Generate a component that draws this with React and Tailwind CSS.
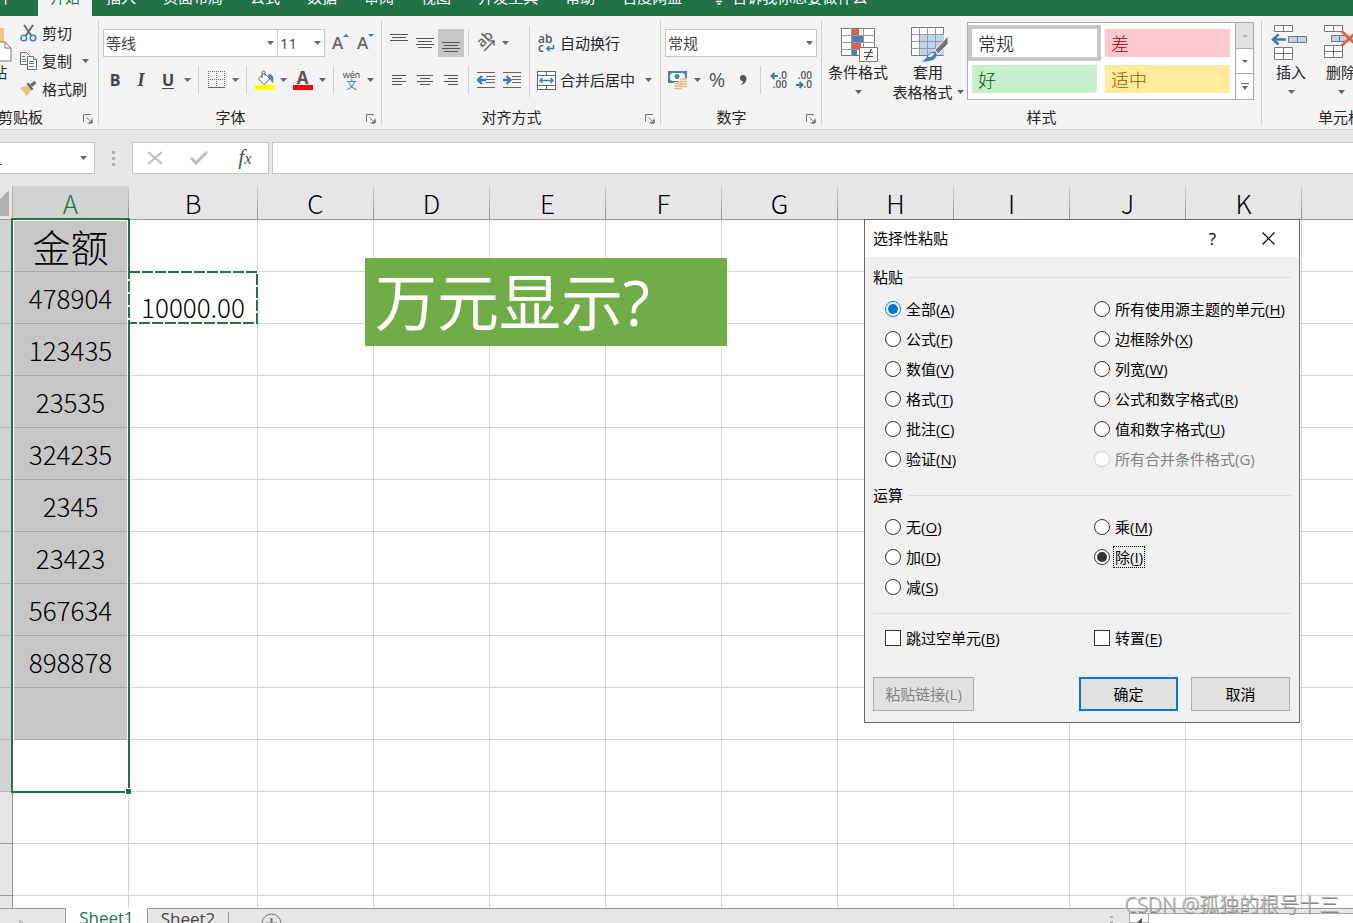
const UI = "font-['Open_Sans','Noto_Sans_CJK_SC',sans-serif]";
const CELL = "font-['Noto_Sans_CJK_SC',sans-serif] font-light";

const TABS = ['文件', '开始', '插入', '页面布局', '公式', '数据', '审阅', '视图', '开发工具', '帮助', '百度网盘'];
const COLUMNS = ['A', 'B', 'C', 'D', 'E', 'F', 'G', 'H', 'I', 'J', 'K', 'L'];
const AMOUNTS = ['金额', '478904', '123435', '23535', '324235', '2345', '23423', '567634', '898878', '', '', '', '', ''];

const PASTE_OPTIONS = [
  { text: '全部', hotkey: 'A', checked: true },
  { text: '所有使用源主题的单元', hotkey: 'H' },
  { text: '公式', hotkey: 'F' },
  { text: '边框除外', hotkey: 'X' },
  { text: '数值', hotkey: 'V' },
  { text: '列宽', hotkey: 'W' },
  { text: '格式', hotkey: 'T' },
  { text: '公式和数字格式', hotkey: 'R' },
  { text: '批注', hotkey: 'C' },
  { text: '值和数字格式', hotkey: 'U' },
  { text: '验证', hotkey: 'N' },
  { text: '所有合并条件格式', hotkey: 'G', disabled: true },
];

const OPERATIONS = [
  { text: '无', hotkey: 'O' },
  { text: '乘', hotkey: 'M' },
  { text: '加', hotkey: 'D' },
  { text: '除', hotkey: 'I', checked: true, focused: true },
  { text: '减', hotkey: 'S' },
];

/* ---------- icons ---------- */

function Caret({ className = '' }) {
  return (
    <svg width="7" height="4" viewBox="0 0 7 4" className={`shrink-0 ${className}`} fill="#666">
      <path d="M0 0h7L3.5 4z" />
    </svg>
  );
}

function CaretButton({ label, className = '' }) {
  return (
    <button aria-label={label} className={`flex h-7 w-3 shrink-0 items-center justify-center ${className}`}>
      <Caret />
    </button>
  );
}

function PasteIcon() {
  return (
    <svg width="40" height="38" viewBox="0 0 40 38">
      <path d="M6 4h26v30H6z" fill="#eec77f" />
      <path d="M18 18h15l6 6v13H18z" fill="#fff" stroke="#777" />
      <path d="M33 18v6h6" fill="none" stroke="#777" />
    </svg>
  );
}

function ScissorsIcon() {
  return (
    <svg width="17" height="18" viewBox="0 0 17 18" fill="none">
      <path d="M4 1l7.5 11M13 1L5.500 12" stroke="#666" strokeWidth="2" />
      <circle cx="3.800" cy="14" r="2.800" stroke="#4a80ba" strokeWidth="1.500" />
      <circle cx="13" cy="14" r="2.800" stroke="#4a80ba" strokeWidth="1.500" />
    </svg>
  );
}

function CopyIcon() {
  return (
    <svg width="17" height="18" viewBox="0 0 17 18" fill="#fff" stroke="#6b6b6b">
      <path d="M.5.5h6l3 3v9h-9z" />
      <path d="M2 4.500h3M2 7.500h4M2 9.500h4" stroke="#4a80ba" />
      <path d="M7.500 4.500h6l3 3v10h-9z" />
      <path d="M13.500 4.500v3h3" />
      <path d="M9 9.500h5M9 11.500h5M9 14.500h5" stroke="#4a80ba" />
    </svg>
  );
}

function BrushIcon() {
  return (
    <svg width="17" height="16" viewBox="0 0 17 16">
      <path d="M0 7l7-2.500 4 5L7 15z" fill="#eec07b" />
      <path d="M6.500 3l2-1.500 5 6.500-2 1.500z" fill="#666" />
      <path d="M11 4.500L15.500 1" stroke="#666" strokeWidth="3" />
    </svg>
  );
}

function LauncherIcon() {
  return (
    <svg width="10" height="10" viewBox="0 0 10 10" fill="none" stroke="#777">
      <path d="M.5 8V.5H8" />
      <path d="M3.500 3.500L8 8M9 4.500V9H4.500" />
      <path d="M9 6v3H6z" fill="#777" />
    </svg>
  );
}

function BorderIcon() {
  return (
    <svg width="17" height="18" viewBox="0 0 17 18" fill="none" stroke="#666" shapeRendering="crispEdges">
      <path d="M0 .5h17M0 8.500h17M.5 0v16M8.500 0v16M16.500 0v16" strokeDasharray="1 1" />
      <path d="M0 16.500h17" />
    </svg>
  );
}

function FillIcon() {
  return (
    <svg width="20" height="20" viewBox="0 0 20 20">
      <path d="M9 3l6 6-6 5.500L3.500 9z" fill="#fff" stroke="#666" />
      <path d="M7 8V2.500C7 .5 10 .5 10 2.500V6" fill="none" stroke="#666" />
      <path d="M13 4c5 0 6 3 5 9-2-1-2-4-4-5z" fill="#4a80ba" />
      <path d="M0 15h20v5H0z" fill="#ff0" />
    </svg>
  );
}

function AlignIcon({ lines, top = 0 }) {
  return (
    <svg width="18" height="18" viewBox="0 0 18 18" stroke="#555" shapeRendering="crispEdges">
      {lines.map(([x1, x2], i) => (
        <path key={i} d={`M${x1} ${top + i * 3 + 0.5}H${x2}`} />
      ))}
    </svg>
  );
}

function IndentIcon({ flip }) {
  return (
    <svg width="18" height="17" viewBox="0 0 18 17" fill="none" stroke="#666">
      <path d="M0 .5h18M9 4.500h9M9 7.500h9M9 10.500h9M0 15.500h18" shapeRendering="crispEdges" />
      <path d={flip ? 'M0 8h7M3.500 4L7.500 8l-4 4' : 'M9 8H1M5 4L1 8l4 4'} stroke="#4078b8" strokeWidth="2.400" />
    </svg>
  );
}

function OrientationIcon() {
  return (
    <svg width="20" height="20" viewBox="0 0 20 20">
      <text x="6" y="15" fontSize="14" fontWeight="600" fill="#666" fontFamily="Open Sans, sans-serif" transform="rotate(-45 6 15)">ab</text>
      <path d="M8 18L18 8M13.500 8H18v4.500" fill="none" stroke="#666" strokeWidth="1.500" />
    </svg>
  );
}

function WrapIcon() {
  return (
    <svg width="17" height="19" viewBox="0 0 17 19">
      <text x="0" y="9" fontSize="12" fontWeight="600" fill="#555" fontFamily="Open Sans, sans-serif">ab</text>
      <text x="0" y="18" fontSize="12" fontWeight="600" fill="#555" fontFamily="Open Sans, sans-serif">c</text>
      <path d="M15.500 11v3.500H9M11.500 12L9 14.500l2.500 2.500" fill="none" stroke="#4078b8" strokeWidth="1.600" />
    </svg>
  );
}

function MergeIcon() {
  return (
    <svg width="19" height="19" viewBox="0 0 19 19" fill="none" stroke="#666">
      <path d="M.5.5h18v18H.5zM0 4.500h19M0 14.500h19M9.500 0v4M9.500 15v4" fill="#fff" shapeRendering="crispEdges" />
      <path d="M3 9.500h13M5.500 7L3 9.500 5.500 12M13.500 7L16 9.500 13.500 12" stroke="#4078b8" strokeWidth="1.500" />
    </svg>
  );
}

function MoneyIcon() {
  return (
    <svg width="20" height="19" viewBox="0 0 20 19">
      <path d="M0 0h19v12H0z" fill="#4a80ba" />
      <path d="M2 4l2-2h11l2 2v4l-2 2H4L2 8z" fill="#fff" />
      <circle cx="9" cy="5.500" r="2.500" fill="#4a80ba" />
      <path d="M11 7h8v9h-8zM6 11h8v8H6z" fill="#f3f3f3" />
      <path d="M12 8h7M12 10.500h7M12 13h7M12 15.500h7M6 12.500h8M6 15h8M6 17.500h8" stroke="#e9b872" strokeWidth="1.700" />
    </svg>
  );
}

function DecimalIcon({ decrease }) {
  return (
    <svg width="18" height="18" viewBox="0 0 18 18" fontFamily="Open Sans, sans-serif" fontSize="10" fontWeight="600" fill="#555">
      <text x="17" y="8" textAnchor="end">{decrease ? '.00' : '.0'}</text>
      <text x="17" y="17" textAnchor="end">{decrease ? '.0' : '.00'}</text>
      <path
        d={decrease ? 'M1 14h6M4.500 11L7.500 14l-3 3' : 'M8 5H2M4.500 2l-3 3 3 3'}
        fill="none"
        stroke="#4078b8"
        strokeWidth="2"
      />
    </svg>
  );
}

function ConditionalIcon() {
  return (
    <svg width="38" height="38" viewBox="0 0 38 38" className="ml-[3px]">
      <path d="M.5 4.500h33v27H.5z" fill="#fff" stroke="#777" />
      <path d="M0 11.500h34M0 18.500h34M0 25.500h34M10.500 4v28M22.500 4v28" stroke="#999" />
      <path d="M11 5h7v6h-7zM11 19h9v6h-9z" fill="#dc6446" />
      <path d="M11 12h11v6H11zM11 26h5v5h-5z" fill="#4a80ba" />
      <path d="M18.500 23.500h18v14h-18z" fill="#fff" stroke="#777" />
      <path d="M23 28.500h9M23 32.500h9M30.500 25L25 36" stroke="#444" strokeWidth="1.200" />
    </svg>
  );
}

function TableStyleIcon() {
  return (
    <svg width="38" height="38" viewBox="0 0 38 38" className="ml-[3px]">
      <path d="M.5 3.500h32v28H.5z" fill="#fff" stroke="#777" />
      <path d="M9 11h24v20H9z" fill="#bfd3ea" />
      <path d="M0 10.500h33M0 17.500h33M0 24.500h33M8.500 3v28M16.500 3v28M24.500 3v28" stroke="#999" />
      <path d="M37 12v8L27 30l-3-4z" fill="#777" stroke="#f3f3f3" />
      <path d="M10 37.500c6-1 6-9 12-10 4 0 5 4 2 7s-8 3-14 3z" fill="#4a80ba" />
      <path d="M17 33c1-3 3-4 6-4-1 3-2 4-6 4z" fill="#fff" />
    </svg>
  );
}

function InsertCellsIcon() {
  return (
    <svg width="37" height="38" viewBox="0 0 37 38" fill="#fff" stroke="#777" className="mr-[3px]">
      <path d="M3.500 1.500h18v6h-18zM12.500 1v7M3.500 23.500h18v12h-18zM3 29.500h19M12.500 23v13" />
      <path d="M17.500 12.500h18v6h-18zM26.500 12v7" fill="#bfd3ea" />
      <path d="M15 15.500H2M7.500 10.500L2 15.500l5.500 5" fill="none" stroke="#4078b8" strokeWidth="2.500" />
    </svg>
  );
}

function DeleteCellsIcon() {
  return (
    <svg width="37" height="38" viewBox="0 0 37 38" fill="#fff" stroke="#777" className="mr-[3px]">
      <path d="M3.500 1.500h18v6h-18zM12.500 1v7M3.500 21.500h18v12h-18zM3 27.500h19M12.500 21v13" />
      <path d="M10.500 11.500h16v6h-16zM18.500 11v7" fill="#bfd3ea" />
      <path d="M21 7.500l15 14M36 7.500l-15 14" fill="none" stroke="#dc6446" strokeWidth="3" />
    </svg>
  );
}

/* ---------- ribbon ---------- */

function Divider({ className = '' }) {
  return <div className={`w-px shrink-0 bg-[#d0d0d0] ${className}`} />;
}

function IconButton({ label, className = '', children }) {
  return (
    <button aria-label={label} className={`flex h-7 shrink-0 items-center justify-center ${className}`}>
      {children}
    </button>
  );
}

function Combo({ label, value, className = '' }) {
  return (
    <div className={`relative ${className}`}>
      <select
        aria-label={label}
        defaultValue={value}
        className="h-7 w-full appearance-none border border-[#c6c6c6] bg-white pl-0.5 text-[15px] text-[#444]"
      >
        <option>{value}</option>
      </select>
      <Caret className="pointer-events-none absolute top-3 right-1" />
    </div>
  );
}

function Group({ title, launcher, className = '', titleClass = '', children }) {
  return (
    <section className={`flex shrink-0 ${className}`}>
      <div className="flex min-w-0 flex-1 flex-col pt-[3px]">
        <div className="h-[88px]">{children}</div>
        <div className="flex h-5 items-center">
          <span className={`flex-1 text-center whitespace-nowrap ${titleClass}`}>{title}</span>
          {launcher && (
            <button aria-label={`${title}设置`} className="pt-1 pr-[5px] pl-1">
              <LauncherIcon />
            </button>
          )}
        </div>
      </div>
      <Divider className="my-1" />
    </section>
  );
}

function BigButton({ icon, lines, caretBelow, className = '' }) {
  return (
    <button className={`flex shrink-0 flex-col items-center pt-[5px] leading-5 ${className}`}>
      {icon}
      {lines.map((line, i) => (
        <span key={line} className="flex items-center gap-1 whitespace-nowrap">
          {line}
          {!caretBelow && i === lines.length - 1 && i > 0 && <Caret />}
        </span>
      ))}
      {caretBelow && (
        <span className="flex h-5 items-center">
          <Caret />
        </span>
      )}
    </button>
  );
}

function ClipboardGroup() {
  return (
    <Group title="剪贴板" launcher className="w-[99px]" titleClass="-ml-[38px]">
      <div className="flex">
        <BigButton icon={<PasteIcon />} lines={['粘贴']} caretBelow className="-ml-7 w-10" />
        <div className="ml-2 flex flex-col">
          <button className="flex h-7 items-center gap-[5px] whitespace-nowrap"><ScissorsIcon />剪切</button>
          <div className="flex items-center gap-1">
            <button className="flex h-7 items-center gap-[5px] whitespace-nowrap"><CopyIcon />复制</button>
            <CaretButton label="复制选项" className="ml-[3px]" />
          </div>
          <button className="flex h-7 items-center gap-[5px] whitespace-nowrap"><BrushIcon />格式刷</button>
        </div>
      </div>
    </Group>
  );
}

function FontGroup() {
  return (
    <Group title="字体" launcher className="w-[283px]">
      <div className="flex flex-col gap-[9px] pt-[10px] pl-1">
        <div className="flex">
          <Combo label="字体" value="等线" className="w-[175px]" />
          <Combo label="字号" value="11" className="-ml-px w-12" />
          <IconButton label="增大字号" className="ml-[3px] w-[25px]">
            <span className="text-[17px] font-semibold text-[#666]">A</span>
            <svg width="6" height="3" viewBox="0 0 6 3" className="mb-4" fill="#4078b8"><path d="M0 3h6L3 0z" /></svg>
          </IconButton>
          <IconButton label="减小字号" className="w-[25px]">
            <span className="text-[17px] font-semibold text-[#666]">A</span>
            <svg width="6" height="3" viewBox="0 0 6 3" className="mb-4" fill="#4078b8"><path d="M0 0h6L3 3z" /></svg>
          </IconButton>
        </div>
        <div className="flex">
          <IconButton label="加粗" className="w-6 text-[16px] font-bold text-[#444]">B</IconButton>
          <IconButton label="倾斜" className="w-7 font-['Liberation_Serif',serif] text-[18px] font-bold text-[#444] italic">I</IconButton>
          <IconButton label="下划线" className="w-[26px] text-[16px] font-bold text-[#444] underline underline-offset-2">U</IconButton>
          <CaretButton label="下划线选项" />
          <Divider className="mx-[5px]" />
          <IconButton label="边框" className="w-[25px]"><BorderIcon /></IconButton>
          <CaretButton label="边框选项" />
          <Divider className="mx-[5px]" />
          <IconButton label="填充颜色" className="w-[25px]"><FillIcon /></IconButton>
          <CaretButton label="填充颜色选项" />
          <IconButton label="字体颜色" className="w-[27px] flex-col">
            <span className="h-[15px] text-[17px] leading-[15px] font-bold text-[#555]">A</span>
            <span className="h-[5px] w-5 bg-[#f00]" />
          </IconButton>
          <CaretButton label="字体颜色选项" />
          <Divider className="mx-[5px]" />
          <IconButton label="拼音指南" className="w-[25px] flex-col">
            <span className="text-[9px] leading-[9px] text-[#444]">wén</span>
            <span className="text-[11px] leading-[11px] text-[#4078b8]">文</span>
          </IconButton>
          <CaretButton label="拼音选项" />
        </div>
      </div>
    </Group>
  );
}

const FULL = [0, 18];
const SHORT = [2, 16];

function AlignmentGroup() {
  return (
    <Group title="对齐方式" launcher className="w-[279px]">
      <div className="flex">
        <div className="flex flex-col gap-[9px] pt-[10px] pl-1">
          <div className="flex">
            <IconButton label="顶端对齐" className="w-[26px]"><AlignIcon lines={[FULL, SHORT, FULL]} /></IconButton>
            <IconButton label="垂直居中" className="w-[26px]"><AlignIcon lines={[FULL, SHORT, FULL, SHORT]} top={4} /></IconButton>
            <IconButton label="底端对齐" className="w-[26px] bg-[#c6c6c6]"><AlignIcon lines={[FULL, SHORT, FULL, SHORT]} top={8} /></IconButton>
            <Divider className="mx-1" />
            <IconButton label="方向" className="w-[26px]"><OrientationIcon /></IconButton>
            <CaretButton label="方向选项" />
          </div>
          <div className="flex">
            <IconButton label="左对齐" className="w-[26px]"><AlignIcon lines={[[2, 16], [2, 12], [2, 16], [2, 12]]} top={4} /></IconButton>
            <IconButton label="居中" className="w-[26px]"><AlignIcon lines={[[1, 17], [4, 14], [1, 17], [4, 14]]} top={4} /></IconButton>
            <IconButton label="右对齐" className="w-[26px]"><AlignIcon lines={[[2, 16], [6, 16], [2, 16], [6, 16]]} top={4} /></IconButton>
            <Divider className="mx-1" />
            <IconButton label="减少缩进量" className="w-[26px]"><IndentIcon /></IconButton>
            <IconButton label="增加缩进量" className="w-[26px]"><IndentIcon flip /></IconButton>
          </div>
        </div>
        <Divider className="mt-[7px] ml-1 h-[71px]" />
        <div className="flex flex-col gap-[9px] pt-[10px] pl-[7px]">
          <button className="flex h-7 items-center gap-1 whitespace-nowrap">
            <span className="flex w-[19px] justify-center"><WrapIcon /></span>自动换行
          </button>
          <div className="flex">
            <button className="flex h-7 items-center gap-1 whitespace-nowrap"><MergeIcon />合并后居中</button>
            <CaretButton label="合并选项" className="ml-[7px]" />
          </div>
        </div>
      </div>
    </Group>
  );
}

function NumberGroup() {
  return (
    <Group title="数字" launcher className="w-[161px]">
      <div className="flex flex-col gap-[9px] pt-[10px] pl-1">
        <Combo label="数字格式" value="常规" className="w-[152px]" />
        <div className="flex">
          <IconButton label="会计数字格式" className="w-[26px]"><MoneyIcon /></IconButton>
          <CaretButton label="会计格式选项" />
          <IconButton label="百分比样式" className="w-7 text-[20px] text-[#555]">%</IconButton>
          <IconButton label="千位分隔样式" className="w-6">
            <svg width="8" height="12" viewBox="0 0 8 12" fill="#555"><path d="M4 1a3 3 0 1 0 0 6c0 2-1 3-3 4 4-.5 6.500-3 6.500-6.500C7.500 2.500 6 1 4 1z" /></svg>
          </IconButton>
          <Divider className="mx-[5px]" />
          <IconButton label="增加小数位数" className="w-[25px]"><DecimalIcon /></IconButton>
          <IconButton label="减少小数位数" className="w-[25px]"><DecimalIcon decrease /></IconButton>
        </div>
      </div>
    </Group>
  );
}

const STYLE_BUTTON = 'h-7 w-[125px] pl-1.5 text-left text-[18px] leading-[26px]';

function StylesGroup() {
  return (
    <Group title="样式" className="w-[440px]">
      <div className="flex">
        <BigButton icon={<ConditionalIcon />} lines={['条件格式']} caretBelow className="ml-1 w-16" />
        <BigButton icon={<TableStyleIcon />} lines={['套用', '表格格式']} className="w-[76px]" />
        <div className="mt-[3px] ml-px flex h-[78px] border border-[#ababab] bg-white">
          <div className={`grid grid-cols-2 content-start gap-2 pt-[6px] pr-[5px] pl-1 ${CELL}`}>
            <button className={`${STYLE_BUTTON} bg-white text-black outline-4 outline-[#c6c6c6]`}>常规</button>
            <button className={`${STYLE_BUTTON} bg-[#ffc7ce] text-[#9c0006]`}>差</button>
            <button className={`${STYLE_BUTTON} bg-[#c6efce] text-[#006100]`}>好</button>
            <button className={`${STYLE_BUTTON} bg-[#ffeb9c] text-[#9c5700]`}>适中</button>
          </div>
          <div className="flex w-[18px] flex-col divide-y divide-[#ababab] border-l border-[#ababab]">
            <button aria-label="上一行" className="flex flex-1 items-center justify-center bg-[#e1e1e1]">
              <svg width="6" height="3" viewBox="0 0 6 3" fill="#b5b5b5"><path d="M0 3h6L3 0z" /></svg>
            </button>
            <button aria-label="下一行" className="flex flex-1 items-center justify-center">
              <svg width="6" height="3" viewBox="0 0 6 3" fill="#666"><path d="M0 0h6L3 3z" /></svg>
            </button>
            <button aria-label="其他样式" className="flex flex-1 items-center justify-center">
              <svg width="8" height="7" viewBox="0 0 8 7" fill="#666"><path d="M0 0h8v1H0zM1 3h6L4 7z" /></svg>
            </button>
          </div>
        </div>
      </div>
    </Group>
  );
}

function Ribbon() {
  return (
    <div className="flex h-[114px] shrink-0 overflow-hidden border-b border-[#d2d2d2] bg-[#f3f3f3] text-[15px] text-[#262626]">
      <ClipboardGroup />
      <FontGroup />
      <AlignmentGroup />
      <NumberGroup />
      <StylesGroup />
      <Group title="单元格" className="w-[158px]">
        <div className="flex pl-1">
          <BigButton icon={<InsertCellsIcon />} lines={['插入']} caretBelow className="w-[50px]" />
          <BigButton icon={<DeleteCellsIcon />} lines={['删除']} caretBelow className="w-[50px]" />
        </div>
      </Group>
    </div>
  );
}

function TabBar() {
  return (
    <nav className="flex h-4 shrink-0 items-end overflow-hidden bg-[#217346] text-[15px] leading-5 whitespace-nowrap text-white">
      {TABS.map((tab, i) => (
        <a
          key={tab}
          href="#"
          className={
            tab === '开始'
              ? 'bg-[#f3f3f3] px-3 pb-[9px] text-[#217346]'
              : `${i === 0 ? '-ml-[19px] pr-[27px]' : i === 2 ? 'mr-[27px] ml-[14px]' : 'mr-[27px]'} pb-[9px]`
          }
        >
          {tab}
        </a>
      ))}
      <a href="#" className="ml-[6px] flex items-end gap-[9px] pb-[9px]">
        <svg width="8" height="16" viewBox="0 0 8 16" fill="none" stroke="#fff" className="mb-0.5">
          <path d="M1 0v10h6V0M1 12.500h6M2.500 15h3" strokeWidth="1.500" />
        </svg>
        告诉我你想要做什么
      </a>
    </nav>
  );
}

function FormulaBar() {
  return (
    <div className="flex h-14 shrink-0 bg-[#e6e6e6] pt-3">
      <div className="relative h-8 w-[95px] shrink-0">
        <input
          aria-label="名称框"
          defaultValue="A1"
          className={`h-8 w-full border border-l-0 border-[#c6c6c6] bg-white -indent-[14px] text-[15px] ${CELL}`}
        />
        <Caret className="pointer-events-none absolute top-[14px] right-2" />
      </div>
      <div className="flex h-8 w-[37px] shrink-0 flex-col items-center justify-center gap-[3px]">
        <span className="size-[3px] bg-[#b0b0b0]" />
        <span className="size-[3px] bg-[#b0b0b0]" />
        <span className="size-[3px] bg-[#b0b0b0]" />
      </div>
      <div className="flex h-8 w-[137px] shrink-0 border border-[#c6c6c6] bg-white">
        <button aria-label="取消输入" className="flex w-[43px] items-center justify-center">
          <svg width="16" height="14" viewBox="0 0 16 14" fill="none" stroke="#bdbdbd" strokeWidth="2"><path d="M1 1l14 12M15 1L1 13" /></svg>
        </button>
        <button aria-label="输入" className="flex flex-1 items-center justify-center">
          <svg width="18" height="14" viewBox="0 0 18 14" fill="none" stroke="#bdbdbd" strokeWidth="3"><path d="M1 7l5 5L17 1" /></svg>
        </button>
        <button aria-label="插入函数" className="w-[46px] font-['Liberation_Serif',serif] text-[22px] leading-7 text-[#555] italic">
          f<span className="text-[17px]">x</span>
        </button>
      </div>
      <input aria-label="编辑栏" className="ml-[3px] h-8 min-w-0 flex-1 border border-r-0 border-[#c6c6c6] bg-white px-2" />
    </div>
  );
}

/* ---------- sheet ---------- */

function SheetGrid() {
  return (
    <table className={`w-full table-fixed border-separate border-spacing-0 text-[26px] text-black ${CELL}`}>
      <colgroup>
        <col className="w-[13px]" />
        <col className="w-[116px]" />
        <col className="w-[129px]" />
        {COLUMNS.slice(2, 11).map(c => <col key={c} className="w-[116px]" />)}
        <col />
      </colgroup>
      <thead>
        <tr className="h-[34px] bg-[#e6e6e6]">
          <th className="border-b border-[#999] p-0">
            <div className="flex h-[33px]">
              <svg width="9" height="26" viewBox="0 0 9 26" className="mt-1 mr-[3px]" fill="#b2b2b2"><path d="M9 0v26H0V9z" /></svg>
              <span className="w-px bg-[#b4b4b4]" />
            </div>
          </th>
          {COLUMNS.map(c => (
            <th key={c} className={`border-b border-[#999] p-0 font-light ${c === 'A' ? 'bg-[#d2d2d2] text-[#217346]' : ''}`}>
              <div className="flex h-[33px]">
                <span className="flex-1 leading-[34px]">{c === 'L' ? '' : c}</span>
                {c !== 'L' && <span className="w-px bg-linear-to-b from-[#cfcfcf] to-[#8e8e8e]" />}
              </div>
            </th>
          ))}
        </tr>
      </thead>
      <tbody>
        {AMOUNTS.map((amount, row) => (
          <tr key={row} className="h-[52px]">
            <th className={`border-r border-b p-0 ${row < 11 ? 'border-[#b4b4b4] bg-[#d2d2d2]' : 'border-[#999] bg-[#e6e6e6]'}`} />
            <td
              className={`border-r border-b p-0 text-center ${row < 10 ? 'border-[#a6a6a6] bg-[#c6c6c6]' : 'border-[#d4d4d4]'} ${row === 0 ? 'text-[38px] leading-[51px]' : 'leading-8'}`}
            >
              {amount}
            </td>
            {COLUMNS.slice(1).map(c => (
              <td key={c} className={`border-b border-[#d4d4d4] p-0 text-center align-bottom leading-8 ${c === 'L' ? '' : 'border-r'}`}>
                {c === 'B' && row === 1 ? '10000.00' : ''}
              </td>
            ))}
          </tr>
        ))}
      </tbody>
    </table>
  );
}

/* ---------- dialog ---------- */

function Choice({ type = 'radio', name, text, hotkey, checked, disabled, focused }) {
  const id = `${name}-${hotkey}`;
  const shape =
    type === 'radio'
      ? 'grid place-content-center rounded-full before:size-[10px] before:rounded-full'
      : '';
  const tone = focused ? 'border-[#333] checked:before:bg-[#333]' : 'border-[#333] checked:border-[#0078d7] checked:before:bg-[#0078d7]';
  return (
    <div className="flex h-[30px] items-center gap-1">
      <input
        id={id}
        type={type}
        name={name}
        defaultChecked={checked}
        disabled={disabled}
        className={`size-4 shrink-0 appearance-none border bg-white ${shape} ${disabled ? 'border-[#ccc]' : tone}`}
      />
      <label
        htmlFor={id}
        className={`px-px leading-5 whitespace-nowrap ${disabled ? 'text-[#838383]' : ''} ${focused ? 'outline-1 outline-black outline-dotted' : ''}`}
      >
        {text}(<span className={disabled ? '' : 'underline underline-offset-2'}>{hotkey}</span>)
      </label>
    </div>
  );
}

function OptionSection({ title, name, options, className = '' }) {
  return (
    <fieldset className={className}>
      <legend className="flex h-5 w-full items-center gap-[5px]">
        {title}
        <span className="h-px flex-1 bg-[#dcdcdc]" />
      </legend>
      <div className="mt-[7px] grid grid-cols-[209px_1fr] pl-3">
        {options.map(o => <Choice key={o.hotkey} name={name} {...o} />)}
      </div>
    </fieldset>
  );
}

function PasteSpecialDialog() {
  return (
    <div
      role="dialog"
      aria-label="选择性粘贴"
      className="absolute top-[33px] left-[864px] w-[436px] border border-[#6a6a6a] bg-[#f0f0f0] text-[15px] text-black"
    >
      <div className="flex h-[37px] items-center bg-white pr-6 pl-2">
        <h2 className="flex-1">选择性粘贴</h2>
        <button aria-label="帮助" className="mr-[46px] text-[17px]">?</button>
        <button aria-label="关闭">
          <svg width="13" height="13" viewBox="0 0 13 13" stroke="#000" strokeWidth="1.200"><path d="M.5.5l12 12M12.500.5l-12 12" /></svg>
        </button>
      </div>
      <form className="px-2 pt-[10px] pb-[11px]">
        <OptionSection title="粘贴" name="paste" options={PASTE_OPTIONS} />
        <OptionSection title="运算" name="operation" options={OPERATIONS} className="mt-[11px]" />
        <div className="mt-[11px] grid grid-cols-[209px_1fr] border-t border-[#dcdcdc] pt-[9px] pl-3">
          <Choice type="checkbox" name="skip" text="跳过空单元" hotkey="B" />
          <Choice type="checkbox" name="transpose" text="转置" hotkey="E" />
        </div>
        <div className="mt-6 flex gap-[13px] pr-px">
          <button type="button" disabled className="mr-auto h-[34px] w-[101px] border border-[#adadad] bg-[#e1e1e1] text-[#838383]">粘贴链接(L)</button>
          <button type="button" className="h-[34px] w-[99px] border-2 border-[#0078d7] bg-[#e1e1e1]">确定</button>
          <button type="button" className="h-[34px] w-[99px] border border-[#adadad] bg-[#e1e1e1]">取消</button>
        </div>
      </form>
    </div>
  );
}

function SheetTabs() {
  return (
    <footer className="flex h-[15px] shrink-0 overflow-hidden bg-[#e6e6e6] text-[17px] leading-5 text-[#444]">
      <div className="w-[66px] shrink-0 border-t border-r border-[#999] pt-[10px] pl-[19px]">
        <svg width="6" height="10" viewBox="0 0 6 10" fill="#b8b8b8"><path d="M0 0l6 5-6 5z" /></svg>
      </div>
      <button className="h-5 w-[81px] shrink-0 bg-white text-[#217346]">Sheet1</button>
      <div className="flex min-w-0 flex-1 border-t border-l border-[#999]">
        <button className="h-5 w-[80px]">Sheet2</button>
        <span className="mt-[3px] w-px bg-[#999]" />
        <button aria-label="新工作表" className="mt-1 ml-8 h-[21px]">
          <svg width="21" height="21" viewBox="0 0 21 21" fill="none" stroke="#777"><circle cx="10.500" cy="10.500" r="9.500" /><path d="M10.500 5v11M5 10.500h11" strokeWidth="2" /></svg>
        </button>
        <div className="mt-[7px] mr-4 ml-auto flex flex-col gap-[3px]">
          <span className="size-[3px] bg-[#b0b0b0]" />
          <span className="size-[3px] bg-[#b0b0b0]" />
        </div>
        <button aria-label="向左滚动" className="mt-1 flex w-5 justify-center border border-[#ababab] bg-white pt-1">
          <svg width="5" height="9" viewBox="0 0 5 9" fill="#555"><path d="M5 0v9L0 4.500z" /></svg>
        </button>
        <div className="mt-1 w-[204px] border-t border-[#ababab] bg-white" />
      </div>
    </footer>
  );
}

export default function App() {
  return (
    <div className={`relative flex h-screen flex-col overflow-hidden bg-white ${UI}`}>
      <TabBar />
      <Ribbon />
      <FormulaBar />
      <main className="relative min-h-0 flex-1 overflow-hidden">
        <SheetGrid />
        {/* selected range A1:A11 with its fill handle */}
        <div className="pointer-events-none absolute top-8 left-[11px] h-[575px] w-[119px] border-2 border-[#217346] shadow-[inset_0_0_0_1px_white]">
          <span className="absolute -right-1 -bottom-1 size-[7px] border border-white bg-[#217346]" />
        </div>
        {/* copied cell B2 */}
        <svg className="pointer-events-none absolute top-[85px] left-32" width="130" height="53" viewBox="0 0 130 53" fill="none" strokeWidth="2">
          <rect x="1" y="1" width="128" height="51" stroke="#fff" />
          <rect x="1" y="1" width="128" height="51" stroke="#217346" strokeDasharray="11 2" />
        </svg>
        <div className="absolute top-[72px] left-[365px] h-[88px] w-[362px] bg-[#70ad47] pl-[10px] text-[62px] leading-[88px] whitespace-nowrap text-white">
          万元显示?
        </div>
        <PasteSpecialDialog />
      </main>
      <SheetTabs />
      <p className="pointer-events-none absolute right-[14px] bottom-1 text-[20px] leading-7 font-light text-[#b4b4b4] [text-shadow:1px_1px_0_#888]">
        CSDN @孤独的根号十三
      </p>
    </div>
  );
}
